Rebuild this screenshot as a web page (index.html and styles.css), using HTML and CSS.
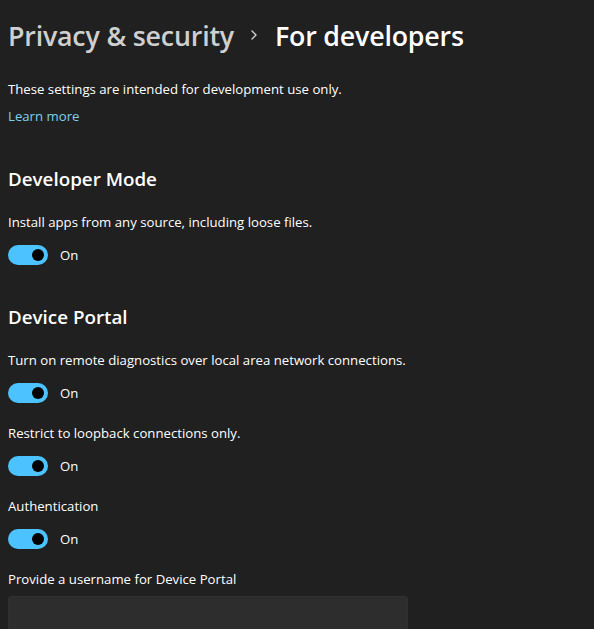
FILE: index.html
```html
<!DOCTYPE html>
<html lang="en">
<head>
<meta charset="utf-8">
<title>For developers</title>
<link rel="stylesheet" href="styles.css">
</head>
<body>
<main class="page">
  <header class="breadcrumb">
    <span class="crumb-parent">Privacy &amp; security</span>
    <svg class="crumb-chevron" width="10" height="12" viewBox="0 0 10 12"><path d="M3 2 L7 6 L3 10" fill="none" stroke="#d0d0d0" stroke-width="1.4" stroke-linecap="round" stroke-linejoin="round"/></svg>
    <span class="crumb-current">For developers</span>
  </header>

  <section class="intro">
    <p class="text">These settings are intended for development use only.</p>
    <a class="link" href="#">Learn more</a>
  </section>

  <section class="group">
    <h2 class="group-title">Developer Mode</h2>
    <div class="setting">
      <p class="text">Install apps from any source, including loose files.</p>
      <label class="toggle"><span class="switch"><span class="knob"></span></span><span class="state">On</span></label>
    </div>
  </section>

  <section class="group">
    <h2 class="group-title">Device Portal</h2>
    <div class="setting">
      <p class="text">Turn on remote diagnostics over local area network connections.</p>
      <label class="toggle"><span class="switch"><span class="knob"></span></span><span class="state">On</span></label>
    </div>
    <div class="setting">
      <p class="text">Restrict to loopback connections only.</p>
      <label class="toggle"><span class="switch"><span class="knob"></span></span><span class="state">On</span></label>
    </div>
    <div class="setting">
      <p class="text">Authentication</p>
      <label class="toggle"><span class="switch"><span class="knob"></span></span><span class="state">On</span></label>
    </div>
    <div class="setting field">
      <p class="text">Provide a username for Device Portal</p>
      <div class="textbox"></div>
    </div>
  </section>
</main>
</body>
</html>
```

FILE: styles.css
```css
html, body {
  margin: 0;
  background: #202020;
  height: 100%;
  overflow: hidden;
}

.page {
  font-family: "Open Sans", "Noto Sans", sans-serif;
  color: #ffffff;
  padding: 15px 8px 0 8px;
  display: flex;
  flex-direction: column;
}

.breadcrumb {
  display: flex;
  align-items: center;
  height: 40px;
  font-size: 26.8px;
  font-weight: 600;
  letter-spacing: -0.2px;
}

.crumb-parent {
  color: #cfcfcf;
}

.crumb-chevron {
  margin: 0 16px 0 15px;
}

.crumb-current {
  color: #ffffff;
}

.text {
  margin: 0;
  font-size: 13.2px;
  line-height: 20px;
  color: #ffffff;
}

.intro {
  margin-top: 24px;
  display: flex;
  flex-direction: column;
  gap: 7px;
}

.link {
  font-size: 13.2px;
  line-height: 20px;
  color: #7fcfee;
  text-decoration: none;
}

.group {
  margin-top: 39px;
  display: flex;
  flex-direction: column;
}

.group + .group {
  margin-top: 38px;
}

.group-title {
  margin: 0;
  font-size: 18.8px;
  line-height: 28px;
  font-weight: 600;
  color: #ffffff;
}

.setting {
  display: flex;
  flex-direction: column;
  gap: 13px;
  margin-top: 20px;
}

.group-title + .setting {
  margin-top: 19px;
}

.field {
  gap: 7px;
}

.toggle {
  display: flex;
  align-items: center;
  gap: 12px;
  height: 20px;
}

.switch {
  width: 40px;
  height: 20px;
  border-radius: 10px;
  background: #4cc2ff;
  display: flex;
  align-items: center;
  justify-content: flex-end;
  padding-right: 4px;
  box-sizing: border-box;
}

.knob {
  width: 12px;
  height: 12px;
  border-radius: 50%;
  background: #000000;
}

.state {
  font-size: 13.2px;
  line-height: 20px;
  color: #ffffff;
}

.textbox {
  width: 400px;
  height: 36px;
  border-radius: 4px;
  background: #2d2d2d;
  border: 1px solid #303030;
  border-bottom: 1px solid #9a9a9a;
  box-sizing: border-box;
}
```
